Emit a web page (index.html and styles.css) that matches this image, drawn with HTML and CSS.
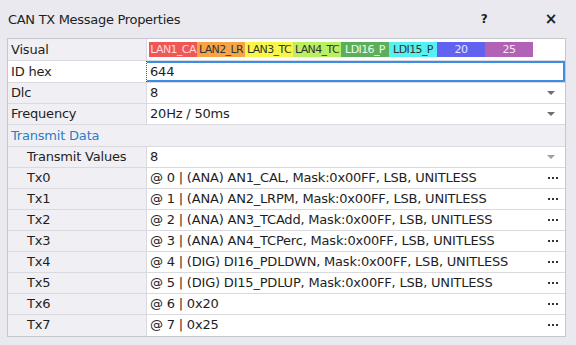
FILE: index.html
```html
<!DOCTYPE html>
<html lang="en">

<head>
  <meta charset="utf-8">
  <title>CAN TX Message Properties</title>
  <link rel="stylesheet" href="styles.css">
</head>

<body>
  <div class="dlg">
    <div class="title">
      <span class="t-txt">CAN TX Message Properties</span>
      <span class="t-btn help">?</span>
      <span class="t-btn close">&times;</span>
    </div>

    <div class="grid">
      <div class="row vis">
        <div class="lbl">Visual</div>
        <div class="val">
          <div class="bar">
            <span class="seg s1">LAN1_CA</span>
            <span class="seg s2">LAN2_LR</span>
            <span class="seg s3">LAN3_TC</span>
            <span class="seg s4">LAN4_TC</span>
            <span class="seg s5">LDI16_P</span>
            <span class="seg s6">LDI15_P</span>
            <span class="seg s7">20</span>
            <span class="seg s8">25</span>
          </div>
        </div>
      </div>
      <div class="row sel">
        <div class="lbl">ID hex</div>
        <div class="val">644</div>
      </div>
      <div class="row">
        <div class="lbl">Dlc</div>
        <div class="val">8<i class="drop"></i></div>
      </div>
      <div class="row">
        <div class="lbl">Frequency</div>
        <div class="val">20Hz / 50ms<i class="drop"></i></div>
      </div>
      <div class="row cat">
        <div class="lbl">Transmit Data</div>
      </div>
      <div class="row sub">
        <div class="lbl">Transmit Values</div>
        <div class="val">8<i class="drop light"></i></div>
      </div>
      <div class="row sub">
        <div class="lbl">Tx0</div>
        <div class="val">@ 0 | (ANA) AN1_CAL, Mask:0x00FF, LSB, UNITLESS<i class="dots"></i></div>
      </div>
      <div class="row sub">
        <div class="lbl">Tx1</div>
        <div class="val">@ 1 | (ANA) AN2_LRPM, Mask:0x00FF, LSB, UNITLESS<i class="dots"></i></div>
      </div>
      <div class="row sub">
        <div class="lbl">Tx2</div>
        <div class="val">@ 2 | (ANA) AN3_TCAdd, Mask:0x00FF, LSB, UNITLESS<i class="dots"></i></div>
      </div>
      <div class="row sub">
        <div class="lbl">Tx3</div>
        <div class="val">@ 3 | (ANA) AN4_TCPerc, Mask:0x00FF, LSB, UNITLESS<i class="dots"></i></div>
      </div>
      <div class="row sub">
        <div class="lbl">Tx4</div>
        <div class="val">@ 4 | (DIG) DI16_PDLDWN, Mask:0x00FF, LSB, UNITLESS<i class="dots"></i></div>
      </div>
      <div class="row sub">
        <div class="lbl">Tx5</div>
        <div class="val">@ 5 | (DIG) DI15_PDLUP, Mask:0x00FF, LSB, UNITLESS<i class="dots"></i></div>
      </div>
      <div class="row sub">
        <div class="lbl">Tx6</div>
        <div class="val">@ 6 | 0x20<i class="dots"></i></div>
      </div>
      <div class="row sub">
        <div class="lbl">Tx7</div>
        <div class="val">@ 7 | 0x25<i class="dots"></i></div>
      </div>
    </div>
  </div>
</body>

</html>
```

FILE: styles.css
```css
html,
body {
  margin: 0;
  padding: 0;
}

body {
  background: #e9e9ef;
  font-family: "DejaVu Sans", Verdana, sans-serif;
  font-size: 13px;
  letter-spacing: -0.2px;
  color: #1e1e1e;
}

.dlg {
  width: 576px;
  height: 345px;
  overflow: hidden;
}

.title {
  display: flex;
  align-items: center;
  height: 38px;
  padding-left: 8px;
  font-size: 13px;
  letter-spacing: -0.3px;
}

.t-txt {
  flex: 1;
}

.t-btn {
  font-weight: 700;
  font-size: 12px;
  width: 16px;
  text-align: center;
}

.help {
  margin-right: 51px;
}

.close {
  font-size: 15px;
  margin-right: 17px;
}

.grid {
  margin-left: 7px;
  width: 557px;
  border: 1px solid #c6c6ce;
  background: #fff;
}

.row {
  display: flex;
  height: 20px;
  border-bottom: 1px solid #d9d9df;
  line-height: 20px;
}

.row:last-child {
  border-bottom: none;
  height: 21px;
}

.vis {
  height: 21px;
  line-height: 22px;
}

.lbl {
  width: 135px;
  padding-left: 3px;
  flex: none;
  background: #f0f0f4;
  border-right: 1px solid #d9d9df;
  white-space: nowrap;
}

.val {
  flex: 1;
  position: relative;
  padding-left: 3px;
  white-space: nowrap;
  overflow: hidden;
  margin-right: 3px;
}

.sub .lbl {
  width: 119px;
  padding-left: 19px;
}

.cat {
  height: 21px;
  line-height: 21px;
}

.cat .lbl {
  flex: 1;
  border-right: none;
  color: #2d7dc8;
}

.sel {
  height: 21px;
  line-height: 21px;
  box-shadow: inset 0 0 0 2px #3d8ee2;
}

.sel .lbl {
  background: #fff;
  border-right: 1px dotted #555;
}

.bar {
  display: flex;
  margin-top: 3px;
  margin-left: -1px;
  height: 15px;
}

.seg {
  width: 48px;
  overflow: hidden;
  text-align: center;
  font-size: 11px;
  line-height: 15px;
  letter-spacing: -0.6px;
  color: #333;
}

.s1 { background: #ef5656; color: #ffd9d9; }
.s2 { background: #f7a447; }
.s3 { background: #f7f74a; }
.s4 { background: #b9f062; }
.s5 { background: #5cae5c; color: #e6ffe6; }
.s6 { background: #55f0f0; }
.s7 { background: #6262f0; color: #e6e6ff; }
.s8 { background: #b262b4; color: #f6e6f6; }

.drop {
  position: absolute;
  right: 7px;
  top: 8px;
  width: 0;
  height: 0;
  border-left: 4px solid transparent;
  border-right: 4px solid transparent;
  border-top: 4px solid #6e6e6e;
}

.drop.light {
  border-top-color: #a0a0a0;
}

.dots {
  position: absolute;
  right: 4px;
  top: 9px;
  width: 2px;
  height: 2px;
  background: #333;
  box-shadow: -4px 0 0 #333, -8px 0 0 #333;
}
```
